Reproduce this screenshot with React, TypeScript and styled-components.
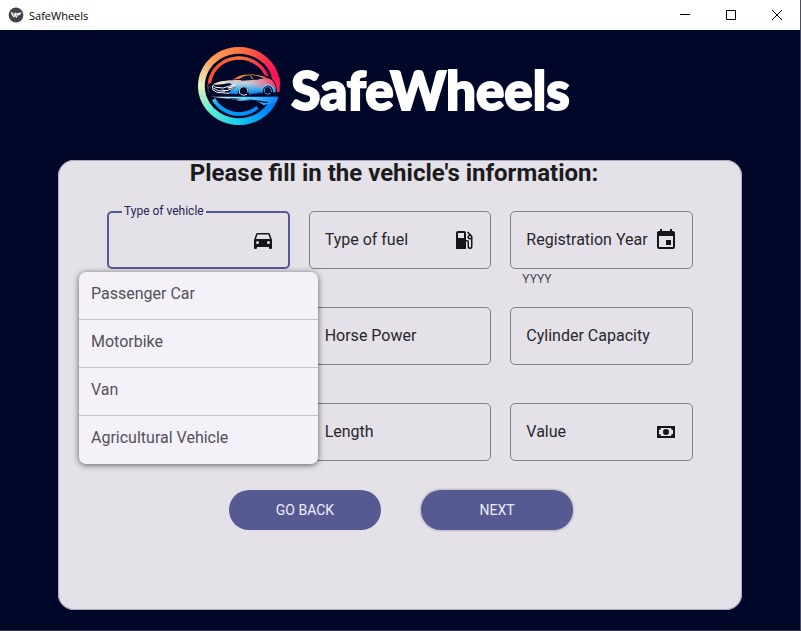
import React, { useState } from "react";
import styled, { createGlobalStyle } from "styled-components";

const GlobalStyle = createGlobalStyle`
  * { box-sizing: border-box; }
  body { margin: 0; font-family: Roboto, sans-serif; }
`;

const Window = styled.div`
  display: flex;
  flex-direction: column;
  min-height: 100vh;
  background: #000729;
  border-right: 1px solid #4b4d5c;
  border-bottom: 1px solid #33343f;
`;

const TitleBar = styled.header`
  display: flex;
  align-items: center;
  height: 30px;
  padding-left: 8px;
  background: #fff;
  color: #000;
  font: 11px "Open Sans", sans-serif;
`;

const TitleText = styled.span`
  flex: 1;
  margin-left: 5px;
`;

const WindowButton = styled.button`
  display: flex;
  align-items: center;
  justify-content: center;
  width: 46px;
  height: 30px;
  padding: 0;
  border: 0;
  background: none;
`;

const Brand = styled.div`
  display: flex;
  align-items: center;
  justify-content: center;
  gap: 11px;
  height: 112px;
  margin-bottom: 18px;
  padding-right: 32px;
`;

const BrandName = styled.h1`
  margin: 0;
  padding-top: 8px;
  color: #fff;
  font: 900 53px/60px Lato, sans-serif;
  -webkit-text-stroke: 2px #fff;
`;

const Card = styled.main`
  flex: 1;
  margin: 0 58px 20px;
  padding: 0 49px 40px;
  border-radius: 16px;
  background: #e4e1e8;
  box-shadow: inset 0 0 0 1px #aaa8bb;
`;

const Heading = styled.h2`
  margin: 0 0 25px;
  padding-right: 12px;
  color: #1c1b20;
  font-size: 24px;
  line-height: 26px;
  font-weight: 700;
  text-align: center;
`;

const FieldGrid = styled.div`
  display: grid;
  grid-template-columns: repeat(3, 1fr);
  grid-auto-rows: minmax(78px, auto);
  gap: 18px 19px;
`;

const Cell = styled.div<{ $column: number }>`
  position: relative;
  grid-column: ${(p) => p.$column};
`;

const Outline = styled.div<{ $active?: boolean }>`
  display: flex;
  align-items: center;
  height: 58px;
  padding: ${(p) => (p.$active ? "0 13px 0 14px" : "0 14px 0 15px")};
  border: ${(p) => (p.$active ? "2px solid #555a92" : "1px solid #817e86")};
  border-radius: 5px;

  svg { flex: none; }
`;

const TextInput = styled.input`
  flex: 1;
  min-width: 0;
  width: 0;
  padding: 0;
  border: 0;
  outline: 0;
  background: none;
  color: #1c1b20;
  font: 16px/24px Roboto, sans-serif;

  &::placeholder { color: #29272d; opacity: 1; }
`;

const FloatingLabel = styled.label`
  position: absolute;
  top: -8px;
  left: 15px;
  padding: 0 2px;
  background: #e4e1e8;
  color: #252456;
  font-size: 12px;
  line-height: 16px;
`;

const Helper = styled.div`
  padding: 1px 12px 0;
  color: #48464e;
  font-size: 12px;
  line-height: 18px;
`;

const Menu = styled.div`
  position: absolute;
  z-index: 1;
  top: 61px;
  left: -28px;
  width: 239px;
  overflow: hidden;
  border-radius: 7px;
  background: #f4f1f9;
  box-shadow: 0 1px 6px rgba(0, 0, 0, 0.6);
`;

const MenuItem = styled.button`
  display: block;
  width: 100%;
  height: 48px;
  padding: 0 12px 4px;
  border: 0;
  border-bottom: 1px solid #c7c4cc;
  background: none;
  color: #535158;
  font: 16px/24px Roboto, sans-serif;
  text-align: left;

  &:last-child { border-bottom-color: transparent; }
`;

const Actions = styled.div`
  display: flex;
  justify-content: center;
  gap: 40px;
  margin-top: 9px;
  padding-left: 2px;
`;

const ActionButton = styled.button<{ $raised?: boolean }>`
  width: 152px;
  height: 40px;
  border: 0;
  border-radius: 20px;
  background: #555a92;
  color: #efedf8;
  font: 14px/20px Roboto, sans-serif;
  box-shadow: ${(p) => (p.$raised ? "0 0 3px rgba(0, 0, 0, 0.4)" : "none")};
`;

const iconPaths = {
  car: "M5,11L6.5,6.5H17.5L19,11M17.5,16A1.5,1.5 0 0,1 16,14.5A1.5,1.5 0 0,1 17.5,13A1.5,1.5 0 0,1 19,14.5A1.5,1.5 0 0,1 17.5,16M6.5,16A1.5,1.5 0 0,1 5,14.5A1.5,1.5 0 0,1 6.5,13A1.5,1.5 0 0,1 8,14.5A1.5,1.5 0 0,1 6.5,16M18.92,6C18.72,5.42 18.16,5 17.5,5H6.5C5.84,5 5.28,5.42 5.08,6L3,12V20A1,1 0 0,0 4,21H5A1,1 0 0,0 6,20V19H18V20A1,1 0 0,0 19,21H20A1,1 0 0,0 21,20V12L18.92,6Z",
  fuel: "M18,10A1,1 0 0,1 17,9A1,1 0 0,1 18,8A1,1 0 0,1 19,9A1,1 0 0,1 18,10M12,10H6V5H12M19.77,7.23L19.78,7.22L16.06,3.5L15,4.56L17.11,6.67C16.17,7 15.5,7.93 15.5,9A2.5,2.5 0 0,0 18,11.5C18.36,11.5 18.69,11.42 19,11.29V18.5A1,1 0 0,1 18,19.5A1,1 0 0,1 17,18.5V14A2,2 0 0,0 15,12H14V5A2,2 0 0,0 12,3H6A2,2 0 0,0 4,5V21H14V13.5H15.5V18.5A2.5,2.5 0 0,0 18,21A2.5,2.5 0 0,0 20.5,18.5V9C20.5,8.31 20.22,7.68 19.77,7.23Z",
  calendar: "M19,19H5V8H19M16,1V3H8V1H6V3H5C3.89,3 3,3.89 3,5V19A2,2 0 0,0 5,21H19A2,2 0 0,0 21,19V5C21,3.89 20.1,3 19,3H18V1M17,12H12V17H17V12Z",
  cash: "M3,6H21V18H3V6M12,9A3,3 0 0,1 15,12A3,3 0 0,1 12,15A3,3 0 0,1 9,12A3,3 0 0,1 12,9M7,8A2,2 0 0,1 5,10V14A2,2 0 0,1 7,16H17A2,2 0 0,1 19,14V10A2,2 0 0,1 17,8H7Z",
};

type IconName = keyof typeof iconPaths;

const Icon = ({ name }: { name: IconName }) => (
  <svg width="24" height="24" viewBox="0 0 24 24" fill="#17151b" fillRule="evenodd" aria-hidden="true">
    <path d={iconPaths[name]} />
  </svg>
);

// Colour stops round the emblem; degrees run clockwise from three o'clock.
const stops: [number, number[]][] = [
  [0, [20, 90, 255]],
  [45, [0, 140, 255]],
  [90, [25, 205, 235]],
  [135, [95, 240, 210]],
  [180, [232, 242, 190]],
  [225, [255, 160, 90]],
  [270, [255, 118, 62]],
  [315, [255, 45, 78]],
  [360, [255, 0, 98]],
];

const innerTop: [number, number[]][] = stops.map(([a, c]) => [a, a >= 180 && a < 270 ? [255, 84, 50] : c]);
const innerBottom: [number, number[]][] = stops.map(([a, c]) => [a, a <= 135 ? [0, 125 + a / 3, 250] : c]);

function colourAt(angle: number, scale: [number, number[]][]) {
  const i = Math.min(scale.length - 2, Math.floor(angle / 45));
  const t = (angle - scale[i][0]) / 45;
  const c = scale[i][1].map((v, k) => Math.round(v + (scale[i + 1][1][k] - v) * t));
  return `rgb(${c.join(",")})`;
}

type ArcProps = { from: number; to: number; rx: number; ry: number; width: number; scale?: [number, number[]][] };

function Arc({ from, to, rx, ry, width, scale = stops }: ArcProps) {
  const point = (a: number) => {
    const r = (a * Math.PI) / 180;
    return `${(132 + rx * Math.cos(r)).toFixed(2)} ${(124 + ry * Math.sin(r)).toFixed(2)}`;
  };
  const parts = [];
  for (let a = from; a < to; a += 3) {
    const end = Math.min(to, a + 4);
    parts.push(
      <path key={a} d={`M${point(a)}L${point(end)}`} stroke={colourAt(a, scale)} strokeWidth={width} fill="none" />
    );
  }
  return <g>{parts}</g>;
}

const Emblem = () => (
  <svg width="82" height="80" viewBox="9 4 246 240" role="img" aria-label="SafeWheels emblem">
    <defs>
      <linearGradient id="roof" x1="0" x2="1">
        <stop offset="0" stopColor="#ff5a48" />
        <stop offset="0.4" stopColor="#ff9a1c" />
        <stop offset="0.75" stopColor="#ffa03a" />
        <stop offset="1" stopColor="#ff2458" />
      </linearGradient>
      <linearGradient id="body" gradientUnits="userSpaceOnUse" x1="0" x2="0" y1="102" y2="150">
        <stop offset="0" stopColor="#f2b9a4" />
        <stop offset="0.3" stopColor="#b6cfdf" />
        <stop offset="0.6" stopColor="#54b4e8" />
        <stop offset="1" stopColor="#0878e8" />
      </linearGradient>
      <linearGradient id="rear" gradientUnits="userSpaceOnUse" x1="165" x2="243" y1="125" y2="108">
        <stop offset="0" stopColor="#e87a90" stopOpacity="0" />
        <stop offset="0.6" stopColor="#e66788" stopOpacity="0.8" />
        <stop offset="1" stopColor="#ff2458" />
      </linearGradient>
      <linearGradient id="road" x1="0" x2="1">
        <stop offset="0" stopColor="#effffa" />
        <stop offset="0.5" stopColor="#6bd4ff" />
        <stop offset="1" stopColor="#0787ff" />
      </linearGradient>
    </defs>
    <Arc from={16} to={369 - 9} rx={113} ry={107} width={20} />
    <Arc from={168} to={342} rx={89} ry={84} width={10} scale={innerTop} />
    <Arc from={50} to={152} rx={86} ry={84} width={11} scale={innerBottom} />
    <path d="M35 142H256V156H35Z" fill="#000729" />
    <path d="M40 117L96 102L124 88L190 84L226 98L246 120L250 146L40 149Z" fill="#000729" />
    <path d="M226 94C238 105 244 118 246 142H254V100Z" fill="#ff1b58" />
    <path
      d="M54 119C72 109 98 107 118 106C150 107 188 101 222 102C236 108 243 122 242 142L234 144C235 116 205 116 203 142L162 150C164 118 132 117 128 148L97 147L120 128L104 116L70 119Z"
      fill="url(#body)"
    />
    <path d="M160 106C188 101 208 101 222 102C236 108 243 122 242 132L232 124C218 114 206 119 203 128L166 130Z" fill="url(#rear)" />
    <path d="M132 103L150 95C172 91 192 94 202 100L188 105L140 108Z" fill="#071032" />
    <path d="M112 105L134 93C166 87 200 89 222 103L208 102C190 90 164 91 149 94L132 103Z" fill="url(#roof)" />
    <path d="M166 93L174 104" stroke="#ff9c31" strokeWidth="3" fill="none" />
    <path d="M52 121L62 128L84 130L100 125L121 120L112 132L96 138L80 136" fill="none" stroke="#fff" strokeWidth="3" />
    <path d="M54 119C66 112 82 109 100 108L88 118L64 120Z" fill="#f6d9c6" />
    <path d="M98 127L118 123L110 130L99 132Z" fill="#eaf8ff" />
    <path d="M52 124L54 136L66 143L102 146M56 131L70 138L90 140" fill="none" stroke="#e8f8ff" strokeWidth="3" />
    <path d="M134 147C127 122 161 118 159 144M136 147Q144 156 156 149" fill="none" stroke="#c6ecff" strokeWidth="3" />
    <path d="M208 143C204 121 231 120 229 142M209 144Q216 153 226 146" fill="none" stroke="#3ba6f5" strokeWidth="3" />
    <path d="M163 147L204 144" stroke="#0a62d0" strokeWidth="3" />
    <path d="M46 156L250 156L244 172L206 182L192 172L174 166L134 168L108 163Z" fill="url(#road)" />
    <path d="M150 162L222 172L212 175L156 164ZM96 160L142 163L120 165Z" fill="#000729" />
  </svg>
);

const AppIcon = () => (
  <svg width="16" height="16" viewBox="0 0 16 16" aria-hidden="true">
    <circle cx="8" cy="8" r="7.4" fill="#404347" />
    <path d="M2.4 5.2L4.8 5.6L6.2 7.2L6.8 5.6L9 6L14 5.6L11.6 8.3L10 8.2L8.6 11L7 9.3L6.2 10.8L4.6 9.5Z" fill="#f2f2f2" />
    <path d="M4.8 5.6L6.2 9.8M9 6L8.6 9" stroke="#85878a" strokeWidth=".7" />
  </svg>
);

type FieldProps = {
  label: string;
  column: number;
  icon?: IconName;
  helper?: string;
};

function Field({ label, column, icon, helper }: FieldProps) {
  return (
    <Cell $column={column}>
      <Outline>
        <TextInput aria-label={label} placeholder={label} />
        {icon && <Icon name={icon} />}
      </Outline>
      {helper && <Helper>{helper}</Helper>}
    </Cell>
  );
}

const vehicleTypes = ["Passenger Car", "Motorbike", "Van", "Agricultural Vehicle"];

function VehicleTypeField() {
  const [value, setValue] = useState("");
  const [open, setOpen] = useState(true);
  const choose = (type: string) => {
    setValue(type);
    setOpen(false);
  };
  return (
    <Cell $column={1}>
      <Outline $active>
        <TextInput
          id="vehicle-type"
          role="combobox"
          aria-expanded={open}
          aria-controls="vehicle-types"
          value={value}
          readOnly
          onClick={() => setOpen(true)}
        />
        <Icon name="car" />
      </Outline>
      <FloatingLabel htmlFor="vehicle-type">Type of vehicle</FloatingLabel>
      {open && (
        <Menu id="vehicle-types" role="listbox">
          {vehicleTypes.map((type) => (
            <MenuItem key={type} type="button" role="option" aria-selected={type === value} onClick={() => choose(type)}>
              {type}
            </MenuItem>
          ))}
        </Menu>
      )}
    </Cell>
  );
}

export default function App() {
  return (
    <>
      <GlobalStyle />
      <Window>
        <TitleBar>
          <AppIcon />
          <TitleText>SafeWheels</TitleText>
          <WindowButton aria-label="Minimize">
            <svg width="10" height="10" viewBox="0 0 10 10"><path d="M0 4.5H10" stroke="#000" /></svg>
          </WindowButton>
          <WindowButton aria-label="Maximize">
            <svg width="10" height="10" viewBox="0 0 10 10"><path d="M.5 .5H9.5V9.5H.5Z" stroke="#000" fill="none" /></svg>
          </WindowButton>
          <WindowButton aria-label="Close">
            <svg width="10" height="10" viewBox="0 0 10 10"><path d="M0 0L10 10M10 0L0 10" stroke="#000" /></svg>
          </WindowButton>
        </TitleBar>
        <Brand>
          <Emblem />
          <BrandName>SafeWheels</BrandName>
        </Brand>
        <Card>
          <Heading>Please fill in the vehicle's information:</Heading>
          <FieldGrid>
            <VehicleTypeField />
            <Field label="Type of fuel" column={2} icon="fuel" />
            <Field label="Registration Year" column={3} icon="calendar" helper="YYYY" />
            <Field label="Horse Power" column={2} />
            <Field label="Cylinder Capacity" column={3} />
            <Field label="Length" column={2} />
            <Field label="Value" column={3} icon="cash" />
          </FieldGrid>
          <Actions>
            <ActionButton type="button">GO BACK</ActionButton>
            <ActionButton type="button" $raised>NEXT</ActionButton>
          </Actions>
        </Card>
      </Window>
    </>
  );
}
